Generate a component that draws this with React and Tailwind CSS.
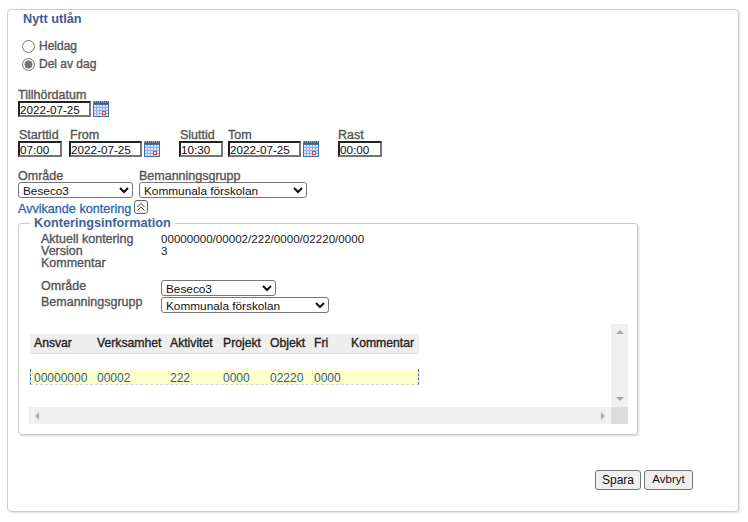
const labelCls = 'h-[12px] leading-[12px] text-[12.5px] text-[#555] [-webkit-text-stroke:0.35px_#555] whitespace-nowrap';
const topLabelCls = 'h-[12px] leading-[14px] text-[12.5px] text-[#555] [-webkit-text-stroke:0.35px_#555] whitespace-nowrap';
const inputCls =
  'block h-[16px] px-0 text-[11.7px] leading-[12px] text-[#111] bg-white border-2 border-t-[#222] border-l-[#222] border-b-[#767676] border-r-[#767676] outline-none';
const selectCls =
  'block h-[16px] text-[11.8px] leading-[12px] text-[#111] bg-white border border-[#767676] rounded-[3px]';
const gridCols = 'grid grid-cols-[63px_73px_53px_47px_44px_37px_72px] items-center';

const columns = [
  { name: 'Ansvar', value: '00000000' },
  { name: 'Verksamhet', value: '00002' },
  { name: 'Aktivitet', value: '222' },
  { name: 'Projekt', value: '0000' },
  { name: 'Objekt', value: '02220' },
  { name: 'Fri', value: '0000' },
  { name: 'Kommentar', value: '' },
];

const CalendarIcon = () => (
  <svg width="16" height="16" viewBox="0 0 16 16" className="block shrink-0">
    <rect x="0" y="0" width="16" height="16" fill="#3f6fb5" />
    <rect x="0" y="0" width="16" height="3" fill="#4a5a70" />
    <path d="M0 1h16" stroke="#d8dde5" strokeDasharray="1 1" />
    <rect x="1" y="4" width="14" height="11" fill="#dbe6f6" />
    <path
      d="M3.5 4v11M6.5 4v11M9.5 4v11M12.5 4v11M1 6.5h14M1 9.5h14M1 12.5h14"
      stroke="#8fb0e0"
      strokeWidth="1"
    />
    <rect x="9" y="10" width="4" height="4" fill="#e8432e" />
    <rect x="10" y="11" width="2" height="2" fill="#fbe3c8" />
  </svg>
);

const CollapseIcon = () => (
  <svg width="14" height="14" viewBox="0 0 14 14" className="block">
    <rect x="0.5" y="0.5" width="13" height="13" rx="2.5" fill="#f4f4f4" stroke="#666" />
    <path d="M3.5 7 7 3.5 10.5 7M3.5 10.5 7 7l3.5 3.5" fill="none" stroke="#444" strokeWidth="1" />
  </svg>
);

const Field = ({ label, labelClass = '', className = '', value, icon }) => (
  <div className={className}>
    <div className={`${topLabelCls} ${labelClass}`}>{label}</div>
    <div className="flex items-center gap-[2px] mt-[1px]">
      <input readOnly value={value} className={`${inputCls} ${value.length > 5 ? 'w-[73px]' : 'w-[44px]'}`} />
      {icon && <CalendarIcon />}
    </div>
  </div>
);

const Radio = ({ label, checked }) => (
  <label className="flex items-center gap-[4px] h-[18px] ml-[4px]">
    <input type="radio" name="typ" defaultChecked={checked} className="w-[13px] h-[13px] accent-[#757575]" />
    <span className="text-[#555] [-webkit-text-stroke:0.35px_#555]">{label}</span>
  </label>
);

export default function App() {
  return (
    <div className="w-[748px] h-[522px] bg-white pt-[9px] pl-[7px] text-[12px] font-['Liberation_Sans',Arial,sans-serif]">
      <div className="w-[732px] h-[503px] pl-[10px] border border-[#ccc] rounded-[4px] shadow-[1px_1px_2px_rgba(0,0,0,0.12)]">
        <h1 className="ml-[5px] mt-[2px] h-[14px] leading-[14px] text-[12.7px] font-bold text-[#3c5c94]">Nytt utlån</h1>

        <div className="mt-[11px]">
          <Radio label="Heldag" />
          <Radio label="Del av dag" checked />
        </div>

        <Field className="mt-[15px]" label="Tillhördatum" value="2022-07-25" icon />

        <div className="flex mt-[11px]">
          <Field label="Starttid" labelClass="ml-[1px]" value="07:00" className="w-[51px]" />
          <Field label="From" labelClass="ml-[1px]" value="2022-07-25" icon className="w-[110px]" />
          <Field label="Sluttid" labelClass="ml-[1px]" value="10:30" className="w-[49px]" />
          <Field label="Tom" value="2022-07-25" icon className="w-[110px]" />
          <Field label="Rast" value="00:00" className="w-[44px]" />
        </div>

        <div className="flex gap-[6px] mt-[12px]">
          <div>
            <div className={topLabelCls}>Område</div>
            <select defaultValue="Beseco3" className={`${selectCls} w-[115px] mt-[1px]`}>
              <option>Beseco3</option>
            </select>
          </div>
          <div>
            <div className={topLabelCls}>Bemanningsgrupp</div>
            <select defaultValue="Kommunala förskolan" className={`${selectCls} w-[168px] mt-[1px]`}>
              <option>Kommunala förskolan</option>
            </select>
          </div>
        </div>

        <div className="flex items-start gap-[3px] mt-[2px] h-[14px]">
          <span className="mt-[2px] leading-[14px] text-[12.6px] text-[#2d68ad] [-webkit-text-stroke:0.3px_#2d68ad]">Avvikande kontering</span>
          <CollapseIcon />
        </div>

        <fieldset className="mt-[2px] w-[620px] h-[219px] pl-[10px] border border-[#ccc] rounded-[3px] shadow-[1px_1px_2px_rgba(0,0,0,0.15)]">
          <legend className="ml-[1px] px-[4px] h-[15px] leading-[15px] text-[12.7px] font-bold text-[#3c6496]">
            Konteringsinformation
          </legend>

          <div className="grid grid-cols-[120px_1fr] ml-[12px] mt-[2px] leading-[12px] text-[11.6px] text-[#222]">
            <div className={labelCls}>Aktuell kontering</div>
            <div>00000000/00002/222/0000/02220/0000</div>
            <div className={labelCls}>Version</div>
            <div>3</div>
            <div className={labelCls}>Kommentar</div>
            <div />
          </div>

          <div className="grid grid-cols-[120px_1fr] ml-[12px] mt-[11px]">
            <div className={labelCls}>Område</div>
            <select defaultValue="Beseco3" className={`${selectCls} w-[115px]`}>
              <option>Beseco3</option>
            </select>
            <div className={labelCls}>Bemanningsgrupp</div>
            <select defaultValue="Kommunala förskolan" className={`${selectCls} w-[168px] mt-[1px]`}>
              <option>Kommunala förskolan</option>
            </select>
          </div>

          <div className="mt-[11px] w-[599px]">
            <div className="flex h-[83px]">
              <div className="w-[582px] pt-[10px] pl-[1px]">
                <div className="w-[389px]">
                  <div className={`${gridCols} h-[20px] pl-[4px] text-[12.2px] bg-[#eee] border-b border-[#ddd] text-[#222] [-webkit-text-stroke:0.35px_#222]`}>
                    {columns.map((c) => (
                      <div key={c.name} className="whitespace-nowrap">{c.name}</div>
                    ))}
                  </div>
                  <div className={`${gridCols} h-[16px] mt-[15px] pl-[3px] pb-[1px] bg-[#ffc] border-x border-dashed border-x-[#2d68ad] border-b border-b-[#cfd6e6] text-[#2d5d9f]`}>
                    {columns.map((c) => (
                      <div key={c.name}>{c.value}</div>
                    ))}
                  </div>
                </div>
              </div>
              <div className="w-[17px] bg-[#f0f0f0] flex flex-col items-center justify-between py-[6px]">
                <div className="w-0 h-0 border-x-[4px] border-x-transparent border-b-[4px] border-b-[#a8a8a8]" />
                <div className="w-0 h-0 border-x-[4px] border-x-transparent border-t-[4px] border-t-[#a8a8a8]" />
              </div>
            </div>
            <div className="flex h-[17px]">
              <div className="w-[582px] bg-[#f0f0f0] flex items-center justify-between px-[6px]">
                <div className="w-0 h-0 border-y-[4px] border-y-transparent border-r-[4px] border-r-[#a8a8a8]" />
                <div className="w-0 h-0 border-y-[4px] border-y-transparent border-l-[4px] border-l-[#a8a8a8]" />
              </div>
              <div className="w-[17px] bg-[#dcdcdc]" />
            </div>
          </div>
        </fieldset>

        <div className="flex justify-end gap-[3px] mt-[35px] pr-[45px]">
          <button className="w-[46px] h-[20px] text-[12px] text-[#111] bg-[#efefef] border border-[#767676] rounded-[3px]">Spara</button>
          <button className="w-[49px] h-[20px] text-[11.5px] text-[#111] bg-[#efefef] border border-[#767676] rounded-[3px]">Avbryt</button>
        </div>
      </div>
    </div>
  );
}
